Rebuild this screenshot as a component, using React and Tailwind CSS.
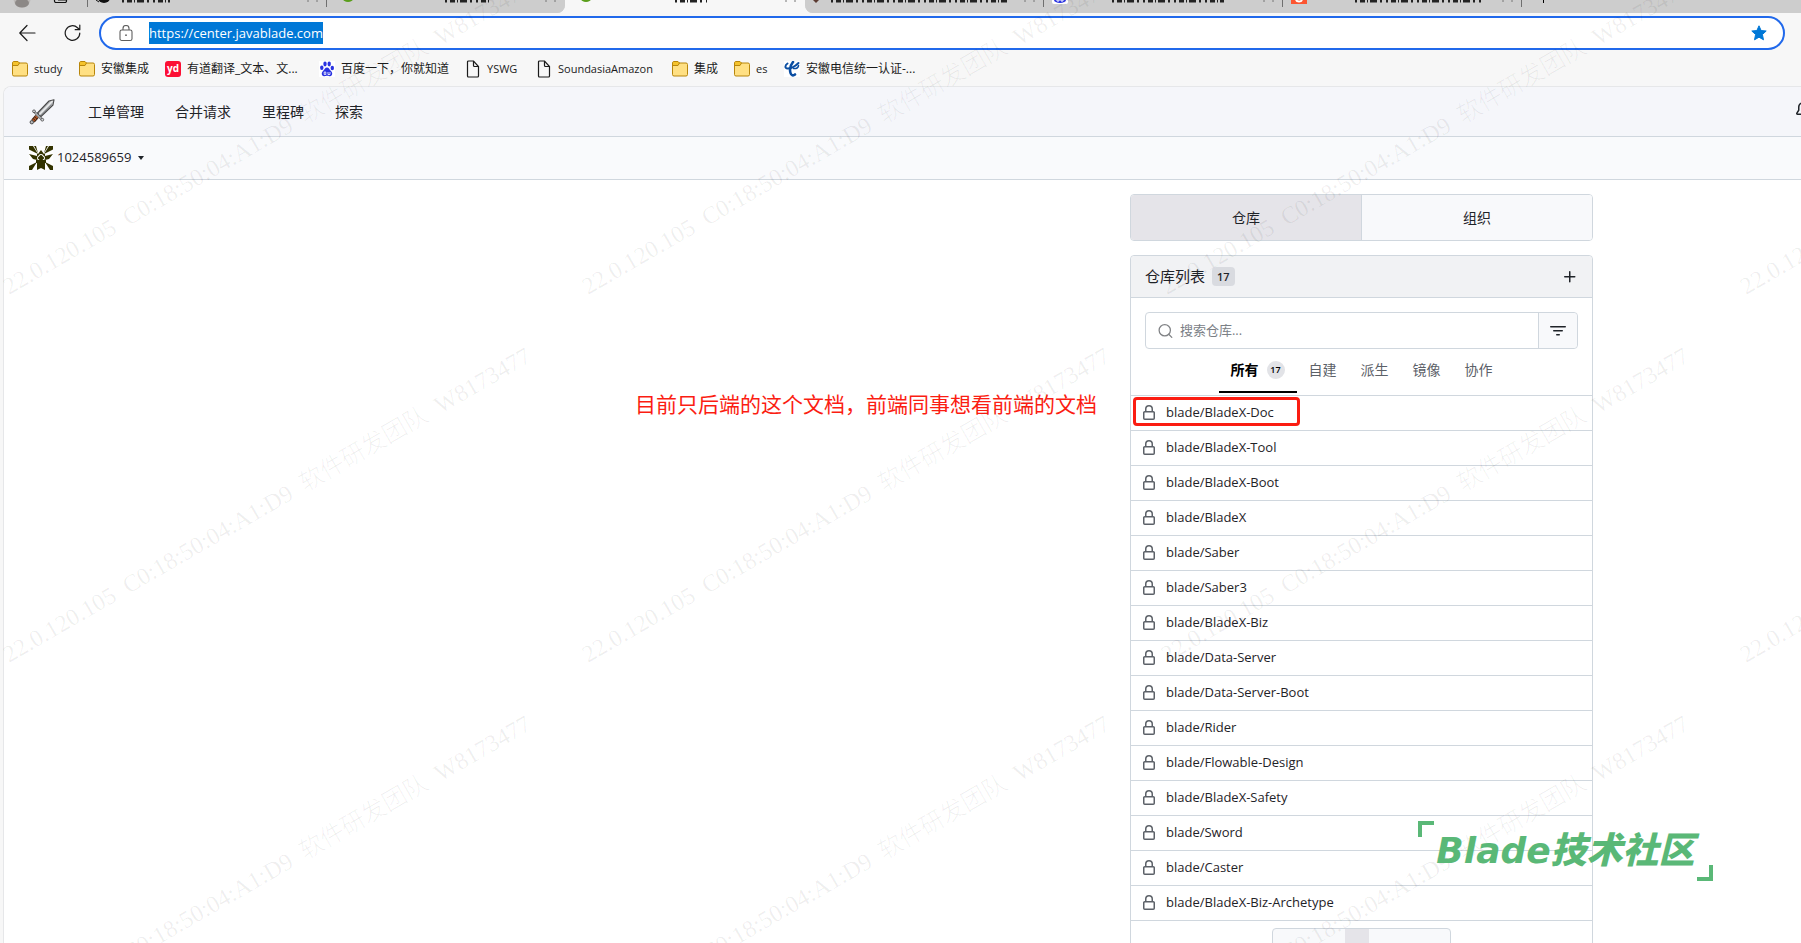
import React from "react";
import { Search } from "lucide-react";

const glyphs = {
  plus: "M7.75 2a.75.75 0 0 1 .75.75V7h4.25a.75.75 0 0 1 0 1.5H8.5v4.25a.75.75 0 0 1-1.5 0V8.5H2.75a.75.75 0 0 1 0-1.5H7V2.75A.75.75 0 0 1 7.75 2Z",
  lock: "M4 4a4 4 0 0 1 8 0v2h.25c.966 0 1.75.784 1.75 1.75v5.5A1.75 1.75 0 0 1 12.25 15h-8.5A1.75 1.75 0 0 1 2 13.25v-5.5C2 6.784 2.784 6 3.75 6H4Zm8.25 3.5h-8.5a.25.25 0 0 0-.25.25v5.5c0 .138.112.25.25.25h8.5a.25.25 0 0 0 .25-.25v-5.5a.25.25 0 0 0-.25-.25ZM10.5 6V4a2.5 2.5 0 1 0-5 0v2Z",
  filter: "M.75 3h14.5a.75.75 0 0 1 0 1.5H.75a.75.75 0 0 1 0-1.5ZM3 7.75A.75.75 0 0 1 3.75 7h8.5a.75.75 0 0 1 0 1.5h-8.5A.75.75 0 0 1 3 7.75Zm3 4a.75.75 0 0 1 .75-.75h2.5a.75.75 0 0 1 0 1.5h-2.5a.75.75 0 0 1-.75-.75Z",
  bell: "M8 16a2 2 0 0 0 1.985-1.75c.017-.137-.097-.25-.235-.25h-3.5c-.138 0-.252.113-.235.25A2 2 0 0 0 8 16ZM3 5a5 5 0 0 1 10 0v2.947c0 .05.015.098.042.139l1.703 2.555A1.519 1.519 0 0 1 13.482 13H2.518a1.516 1.516 0 0 1-1.263-2.36l1.703-2.554A.255.255 0 0 0 3 7.947Zm5-3.5A3.5 3.5 0 0 0 4.5 5v2.947c0 .346-.102.683-.294.97l-1.703 2.556a.017.017 0 0 0 .015.027h10.964a.017.017 0 0 0 .015-.027l-1.703-2.556a1.745 1.745 0 0 1-.294-.97V5A3.5 3.5 0 0 0 8 1.5Z",
};

function Glyph({ name, size = 16, className = "" }) {
  return (
    <svg width={size} height={size} viewBox="0 0 16 16" fill="currentColor" className={"shrink-0 " + className} aria-hidden="true">
      <path d={glyphs[name]} />
    </svg>
  );
}

function Folder() {
  return (
    <svg width="16" height="16" viewBox="0 0 16 16" className="shrink-0" aria-hidden="true">
      <rect x="0.5" y="2" width="15" height="13" rx="1.5" fill="#ffe083" stroke="#b8860b" />
      <path d="M0.5 5V2C0.5 1 1 .5 2 .5h4L7.5 2 6 4.5H.5Z" fill="#f5c32c" stroke="#b8860b" />
    </svg>
  );
}

function PageIcon() {
  return (
    <svg width="16" height="18" viewBox="0 0 16 18" className="shrink-0" fill="none" stroke="#1b1b1b" strokeWidth="1.2" aria-hidden="true">
      <path d="M3.500 1h5L13.500 6.500V16a1 1 0 0 1-1 1H3.500a1 1 0 0 1-1-1V2a1 1 0 0 1 1-1Z" />
      <path d="M8.500 1v4.500a1 1 0 0 0 1 1H13.500" />
    </svg>
  );
}

function Youdao() {
  return (
    <svg width="16" height="16" viewBox="0 0 16 16" className="shrink-0" aria-hidden="true">
      <rect width="16" height="16" rx="3" fill="#fc1034" />
      <text x="8" y="11" textAnchor="middle" fontSize="10" fontWeight="700" fill="#fff" fontFamily="Open Sans, sans-serif">yd</text>
    </svg>
  );
}

function Paw() {
  return (
    <svg width="16" height="16" viewBox="0 0 16 16" className="shrink-0" aria-hidden="true">
      <rect width="16" height="16" fill="#fff" />
      <g fill="#2932e1">
        <ellipse cx="2.800" cy="6.800" rx="1.700" ry="2.200" />
        <ellipse cx="6" cy="3" rx="1.700" ry="2.400" />
        <ellipse cx="10.200" cy="3" rx="1.700" ry="2.400" />
        <ellipse cx="13.300" cy="7" rx="1.700" ry="2.200" />
        <path d="M8 6.500c2 0 2.500 2.200 4 3.500 1.800 1.500 1.700 5-1 5.200-1.500.1-2-.4-3-.4s-1.500.5-3 .4c-2.700-.2-2.800-3.700-1-5.200 1.500-1.300 2-3.500 4-3.500Z" />
      </g>
      <path d="M5.200 11h1.600v2.500H5.200ZM9 11v2.500h2V11" fill="none" stroke="#fff" strokeWidth="0.8" />
    </svg>
  );
}

function Telecom() {
  return (
    <svg width="16" height="16" viewBox="0 0 16 16" className="shrink-0" aria-hidden="true">
      <rect width="16" height="16" fill="#fff" />
      <g fill="none" stroke="#0b4ea2" strokeLinecap="round">
        <path d="M3.500 2.500C1 4 .5 7.500 3.500 7.500 7.500 7.500 11.500 5 14.500 2" strokeWidth="2" />
        <path d="M9 1C6.500 4 5.500 8.500 6.500 12c.7 2.500 2.700 3 4.500 1.500" strokeWidth="2.600" />
        <path d="M9.500 7.500c3 .3 5-.8 5-3" strokeWidth="1.600" />
      </g>
    </svg>
  );
}

function Sword() {
  return (
    <svg width="26" height="26" viewBox="0 0 26 26" aria-hidden="true">
      <path d="M25 .8 20 2 8.500 14l3.500 3.500L24 6Z" fill="#b9bbbe" stroke="#4a4a4a" strokeWidth="1.100" strokeLinejoin="round" />
      <path d="M23.500 2 10.300 15.500" stroke="#eceded" strokeWidth="1.300" />
      <path d="M22.500 5.500 11.800 16.300" stroke="#8b8e92" strokeWidth="1" />
      <path d="M5.500 13 12.500 20" stroke="#4a4a4a" strokeWidth="2.400" strokeLinecap="round" />
      <path d="M5.500 13 12.500 20" stroke="#b5b8bb" strokeWidth="1.100" strokeLinecap="round" />
      <circle cx="5" cy="12.300" r="1.400" fill="#d5d7da" stroke="#4a4a4a" strokeWidth=".8" />
      <circle cx="13.300" cy="20.700" r="1.400" fill="#d5d7da" stroke="#4a4a4a" strokeWidth=".8" />
      <path d="M8 17.500 4 22" stroke="#3a2010" strokeWidth="4.400" />
      <path d="M8 17.500 4 22" stroke="#b4592a" strokeWidth="2.800" strokeDasharray="1.500 .7" />
      <circle cx="2.800" cy="23.200" r="1.700" fill="#b9bbbe" stroke="#4a4a4a" />
    </svg>
  );
}

function Identicon() {
  return (
    <svg width="24" height="24" viewBox="0 0 24 24" aria-hidden="true">
      <rect width="24" height="24" fill="#fff" />
      <g fill="#333300">
        <path d="M0 0h4l5 8L0 3.500ZM24 0h-4l-5 8 9-4.500Z" />
        <path d="M0 24h3l5-8-8 4ZM24 24h-3l-5-8 8 4Z" />
        <path d="M5 0h2l2 7ZM19 0h-2l-2 7Z" />
        <path d="M12 4 15 8H9ZM0 8l8 2v4l-4-1ZM24 8l-8 2v4l4-1ZM8 17h8v7l-4-2-4 2Z" />
        <path d="M8 8h3L8 11ZM16 8h-3l3 3ZM8 16h3l-3-3ZM16 16h-3l3-3Z" />
        <path d="M12 8.500 15.500 12 12 15.500 8.500 12Z" />
        <path d="M7 14h10v3H7Z" />
      </g>
    </svg>
  );
}

function TabTitle({ className }) {
  return (
    <svg className={"shrink-0 " + className} height="3" aria-hidden="true">
      <line x1="0" x2="100%" y1="1" y2="1" stroke="#222" strokeWidth="3" strokeDasharray="2 3 5 2 1 2 7 3 2 4" />
    </svg>
  );
}

function Tab({ icon, title, active, divided }) {
  return (
    <button
      type="button"
      aria-label="标签页"
      className={
        "relative flex h-full min-w-0 flex-1 items-start gap-3 px-2 " + (active ? "bg-[#f7f7f7]" : "bg-[#cdcdcd]")
      }
    >
      {icon}
      <TabTitle className={title} />
      <svg className="ml-auto shrink-0" width="12" height="2" aria-hidden="true">
        <path d="M1 0v2M10 0v2" stroke="#777" />
      </svg>
      {divided && <span className="absolute top-0 right-0 h-[7px] w-px bg-[#6f6f6f]" />}
    </button>
  );
}

function Leaf() {
  return (
    <svg width="10" height="3" className="ml-2 shrink-0" aria-hidden="true">
      <ellipse cx="5" cy="-1" rx="5" ry="3" fill="#5a9e1b" />
    </svg>
  );
}

const bookmarks = [
  { icon: <Folder />, label: "study", cls: "w-[51px] text-[11px]" },
  { icon: <Folder />, label: "安徽集成", cls: "w-[70px] text-xs" },
  { icon: <Youdao />, label: "有道翻译_文本、文...", cls: "w-[138px] text-xs" },
  { icon: <Paw />, label: "百度一下，你就知道", cls: "w-[130px] text-xs" },
  { icon: <PageIcon />, label: "YSWG", cls: "w-[55px] text-[11px]" },
  { icon: <PageIcon />, label: "SoundasiaAmazon", cls: "w-[120px] text-[11px]" },
  { icon: <Folder />, label: "集成", cls: "w-[46px] text-xs" },
  { icon: <Folder />, label: "es", cls: "w-[34px] text-[11px]" },
  { icon: <Telecom />, label: "安徽电信统一认证-...", cls: "w-[132px] text-xs" },
];

const repos = [
  "BladeX-Doc", "BladeX-Tool", "BladeX-Boot", "BladeX", "Saber", "Saber3", "BladeX-Biz", "Data-Server",
  "Data-Server-Boot", "Rider", "Flowable-Design", "BladeX-Safety", "Sword", "Caster", "BladeX-Biz-Archetype",
];

function BrowserChrome() {
  return (
    <header className="shrink-0">
      <div className="flex h-[13px] overflow-hidden bg-[#f7f7f7]">
        <div className="flex w-[565px] shrink-0 overflow-hidden rounded-br-lg bg-[#cdcdcd]">
          <div className="relative flex w-[88px] shrink-0 items-start gap-[22px] pl-[13px]">
            <svg width="18" height="8" aria-hidden="true">
              <circle cx="9" cy="-1" r="8.500" fill="#bdbab8" />
              <ellipse cx="9" cy="3" rx="7" ry="4.500" fill="#8c8886" />
            </svg>
            <svg width="16" height="5" fill="none" stroke="#111" strokeWidth="1.200" aria-hidden="true">
              <path d="M1.500 -4v5a1.500 1.500 0 0 0 1.500 1.500h9a1.500 1.500 0 0 0 1.500-1.500v-5M5 0h8" />
            </svg>
            <span className="absolute top-0 right-0 h-[7px] w-px bg-[#6f6f6f]" />
          </div>
          <Tab
            divided
            title="w-12"
            icon={
              <svg width="14" height="4" className="shrink-0" aria-hidden="true">
                <ellipse cx="8" cy="-2" rx="6" ry="5" fill="#111" />
                <path d="M0 0l3 2" stroke="#111" />
              </svg>
            }
          />
          <Tab title="ml-20 w-11" icon={<Leaf />} />
        </div>
        <div className="flex w-60 shrink-0">
          <Tab active title="ml-[72px] w-8" icon={<Leaf />} />
        </div>
        <div className="flex min-w-0 flex-1 overflow-hidden rounded-bl-lg bg-[#cdcdcd]">
          <div className="flex w-[717px] shrink-0">
            <Tab
              divided
              title="w-44"
              icon={
                <svg width="6" height="3" className="shrink-0" aria-hidden="true">
                  <path d="M0 0h6L3 3Z" fill="#5b3a31" />
                </svg>
              }
            />
            <Tab
              divided
              title="ml-8 w-28"
              icon={
                <svg width="16" height="5" className="shrink-0" aria-hidden="true">
                  <rect y="-3" width="16" height="7" rx="2" fill="#fff" />
                  <ellipse cx="8" cy="0" rx="6" ry="3" fill="#2932e1" />
                  <path d="M5 0v1h2V0M9 0v1h2V0" stroke="#fff" fill="none" />
                </svg>
              }
            />
            <Tab
              divided
              title="ml-9 w-32"
              icon={
                <svg width="16" height="5" className="shrink-0" aria-hidden="true">
                  <rect width="16" height="4" fill="#fc5531" />
                  <path d="M5 0c1 2 5 2 6 0" stroke="#fff" strokeWidth="2" fill="none" />
                </svg>
              }
            />
          </div>
          <span className="ml-[21px] h-[3px] w-px bg-black" />
        </div>
      </div>

      <div className="flex items-center bg-[#f7f7f7] pt-[3px] pr-4 pl-[19px]">
        <button type="button" aria-label="返回" className="mr-7">
          <svg width="17" height="18" viewBox="0 0 17 18" fill="none" stroke="#1b1b1b" strokeWidth="1.200" strokeLinecap="round" strokeLinejoin="round">
            <path d="M16 9H1M8 1.500.8 9 8 16.500" />
          </svg>
        </button>
        <button type="button" aria-label="刷新" className="mr-[18px]">
          <svg width="17" height="18" viewBox="0 0 17 18" fill="none" stroke="#1b1b1b" strokeWidth="1.200" strokeLinecap="round" strokeLinejoin="round">
            <path d="M15.800 9A7.300 7.300 0 1 1 13.500 3.700L15.500 5.500M15.800 1v4.700h-4.600" />
          </svg>
        </button>
        <div className="flex h-[34px] min-w-0 flex-1 items-center rounded-full border-2 border-[#2169eb] bg-white pr-4 pl-[18px]">
          <svg width="14" height="17" viewBox="0 0 14 17" fill="none" stroke="#5f5f5f" strokeWidth="1.100" className="mr-4 shrink-0" aria-hidden="true">
            <rect x="1" y="5" width="12" height="10.500" rx="1.800" />
            <path d="M4 5V3.500a3 3 0 0 1 6 0V5" />
            <circle cx="7" cy="10.200" r=".9" fill="#5f5f5f" stroke="none" />
          </svg>
          <a href="https://center.javablade.com" className="bg-[#0078d7] text-[13px] leading-[22px] text-white">
            https://center.javablade.com
          </a>
          <button type="button" aria-label="收藏" className="ml-auto">
            <svg width="16" height="16" viewBox="0 0 16 16" fill="#0078d7" stroke="#0078d7" strokeLinejoin="round">
              <path d="m8 .8 2.100 4.700 5.100.5-3.800 3.500 1.100 5.300L8 12.200l-4.500 2.600 1.100-5.300L.8 6l5.100-.5Z" />
            </svg>
          </button>
        </div>
      </div>

      <nav className="flex h-9 items-center gap-4 bg-[#f7f7f7] pt-[2px] pl-3" aria-label="书签">
        {bookmarks.map((b, i) => (
          <a key={i} href="#" className={"flex shrink-0 items-center gap-[6px] whitespace-nowrap text-[#1b1b1b] " + b.cls}>
            {b.icon}
            {b.label}
          </a>
        ))}
      </nav>
    </header>
  );
}

function RepoPanel() {
  return (
    <aside className="w-[463px] shrink-0">
      <div className="flex h-[47px] overflow-hidden rounded border border-[#d0d7de] text-sm">
        <button type="button" className="flex-1 border-r border-[#d0d7de] bg-[#e5e4e9]">仓库</button>
        <button type="button" className="flex-1 bg-[#f8f9fb]">组织</button>
      </div>

      <section className="mt-[14px] rounded-t border border-[#d0d7de]">
        <div className="flex h-[42px] items-center rounded-t border-b border-[#d0d7de] bg-[#f1f2f4] px-[14px]">
          <h2 className="text-[15px]">仓库列表</h2>
          <span className="ml-[7px] rounded bg-[#d9dbe0] px-[5px] text-[11px] leading-[19px] font-semibold">17</span>
          <button type="button" aria-label="新建仓库" className="ml-auto">
            <Glyph name="plus" />
          </button>
        </div>

        <div className="px-[14px] pt-[14px]">
          <div className="flex h-[37px] rounded border border-[#d0d7de]">
            <label className="flex flex-1 items-center gap-[6px] pl-[11px]">
              <Search size={18} strokeWidth={1.8} color="#808285" />
              <input
                type="text"
                aria-label="搜索仓库"
                placeholder="搜索仓库..."
                className="w-full bg-transparent text-[13px] outline-none placeholder:text-[#7b8086]"
              />
            </label>
            <button type="button" aria-label="筛选" className="flex w-[39px] items-center justify-center rounded-r border-l border-[#d0d7de] bg-[#f8f9fb]">
              <Glyph name="filter" />
            </button>
          </div>
        </div>

        <div className="flex h-[47px] items-stretch justify-center border-b border-[#d0d7de] pb-[2px] text-sm text-[#5c6168]" role="tablist">
          <button type="button" role="tab" aria-selected="true" className="flex items-center gap-2 border-b-2 border-black px-3 font-bold text-black">
            所有
            <span className="flex size-[18px] items-center justify-center rounded-full bg-[#e2e3e7] text-[9px] font-semibold">17</span>
          </button>
          {["自建", "派生", "镜像", "协作"].map((t) => (
            <button key={t} type="button" role="tab" aria-selected="false" className="border-b-2 border-transparent px-3">{t}</button>
          ))}
        </div>

        <ul>
          {repos.map((r, i) => (
            <li key={r} className="relative flex h-[35px] items-center border-b border-[#d0d7de] pl-[10px]">
              <a href="#" className="flex items-center gap-[9px] text-[13px]">
                <Glyph name="lock" className="text-[#5c6168]" />
                blade/{r}
              </a>
              {i === 0 && (
                <span className="pointer-events-none absolute top-px left-[2px] h-[29px] w-[167px] rounded-sm border-[3px] border-[#fb1d12]" />
              )}
            </li>
          ))}
        </ul>

        <div className="flex justify-center pt-[7px]">
          <div className="flex h-9 w-[179px] rounded border border-[#d0d7de] bg-[#f8f9fb]">
            <span className="ml-[72px] w-6 bg-[#e5e4e9]" />
          </div>
        </div>
      </section>
    </aside>
  );
}

function Watermarks() {
  const tiles = [];
  for (let row = 0; row < 3; row++) for (let col = 0; col < 4; col++) tiles.push([9 + col * 579, 295 + row * 368]);
  return (
    <svg className="pointer-events-none absolute inset-0 h-full w-full" aria-hidden="true">
      {tiles.map(([x, y]) => (
        <text
          key={x + "-" + y}
          transform={`translate(${x} ${y}) rotate(-30)`}
          fontSize="24"
          fill="#000"
          fillOpacity="0.065"
          className="font-['Liberation_Serif','Noto_Sans_CJK_SC',serif] font-light whitespace-pre"
        >
          {"22.0.120.105  C0:18:50:04:A1:D9  软件研发团队  W8173477"}
        </text>
      ))}
    </svg>
  );
}

export default function App() {
  return (
    <div className="relative flex h-screen flex-col overflow-hidden bg-[#f7f7f7] font-['Open_Sans','Noto_Sans_CJK_SC',sans-serif] text-[#1f2328]">
      <BrowserChrome />
      <div className="ml-[3px] flex min-h-0 flex-1 flex-col overflow-hidden rounded-tl-lg border-t border-l border-[#e6e7e9] bg-white">
        <nav className="flex h-[50px] shrink-0 items-center border-b border-[#d0d7de] bg-[#f5f6fa] pl-[25px] text-sm" aria-label="主导航">
          <a href="#" aria-label="首页" className="mr-[33px]"><Sword /></a>
          <div className="flex gap-[31px]">
            <a href="#">工单管理</a>
            <a href="#">合并请求</a>
            <a href="#">里程碑</a>
            <a href="#">探索</a>
          </div>
          <button type="button" aria-label="通知" className="-mr-[10px] mb-1 ml-auto shrink-0">
            <Glyph name="bell" />
          </button>
        </nav>
        <div className="flex h-[43px] shrink-0 items-center border-b border-[#d0d7de] bg-[#f9fafc] pl-[25px]">
          <button type="button" className="flex items-center gap-1 text-[13px]">
            <Identicon />
            1024589659
            <svg width="8" height="4" className="ml-[2px]" aria-hidden="true">
              <path d="M1 0h6L4 4Z" fill="#1f2328" />
            </svg>
          </button>
        </div>
        <main className="flex min-h-0 flex-1 gap-[33px] pt-[14px] pr-52">
          <p className="flex-1 pt-[193px] text-right text-[21px] leading-[34px] text-[#fb1d12]">
            目前只后端的这个文档，前端同事想看前端的文档
          </p>
          <RepoPanel />
        </main>
      </div>

      <Watermarks />

      <div className="pointer-events-none absolute right-[88px] bottom-[62px] flex h-[60px] w-[295px] items-center justify-center text-[#5ab877]">
        <span className="absolute top-0 left-0 size-4 border-t-4 border-l-4 border-[#5ab877]" />
        <span className="font-['DejaVu_Sans','Noto_Sans_CJK_SC',sans-serif] text-[36px] leading-none font-black whitespace-nowrap italic">
          Blade技术社区
        </span>
        <span className="absolute right-0 bottom-0 size-4 border-r-4 border-b-4 border-[#5ab877]" />
      </div>
    </div>
  );
}
